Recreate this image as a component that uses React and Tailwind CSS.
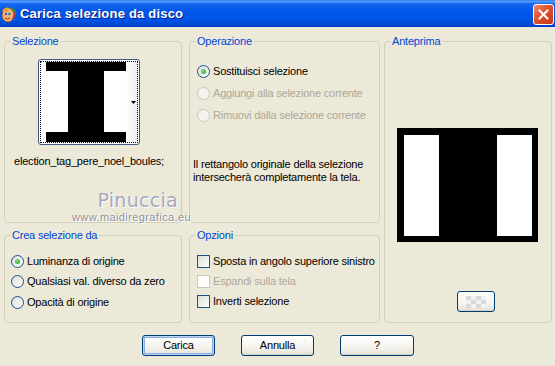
import React from "react";

function Radio({ checked, disabled }) {
  return (
    <span
      className={`inline-flex w-[13px] h-[13px] shrink-0 rounded-full border items-center justify-center ${
        disabled
          ? "border-[#CAC8BB] bg-[#F4F3EE]"
          : "border-[#1C5180] bg-[linear-gradient(135deg,#DCDCD7,#FFFFFF)]"
      }`}
    >
      {checked && (
        <span className="w-[5px] h-[5px] rounded-full bg-[radial-gradient(circle_at_35%_35%,#7BE07B,#21A121)]" />
      )}
    </span>
  );
}

function Check({ disabled }) {
  return (
    <span
      className={`inline-block w-[13px] h-[13px] shrink-0 border ${
        disabled
          ? "border-[#CAC8BB] bg-white"
          : "border-[#1C5180] bg-[linear-gradient(135deg,#DCDCD7,#FFFFFF)]"
      }`}
    />
  );
}

function Group({ label, className, children }) {
  return (
    <fieldset
      className={`border border-[#D0D0BF] rounded-[4px] m-0 p-0 min-w-0 ${className}`}
    >
      <legend className="ml-[5px] px-[2px] leading-[13px] text-[#0046D5]">
        {label}
      </legend>
      {children}
    </fieldset>
  );
}

function XPButton({ children, isDefault, className }) {
  return (
    <div
      className={`h-[21px] rounded-[3px] border border-[#003C74] flex items-center justify-center bg-[linear-gradient(180deg,#FFFFFF_0%,#F4F3EE_60%,#E3E0D6_100%)] text-black ${
        isDefault
          ? "shadow-[inset_0_0_0_1px_#BCD4F6,inset_0_0_0_2px_#89ADE4]"
          : "shadow-[inset_0_-1px_0_#D6D0C5]"
      } ${className}`}
    >
      {children}
    </div>
  );
}

function TitleIcon() {
  return (
    <svg width="16" height="18" viewBox="0 0 16 18">
      <ellipse cx="7" cy="10" rx="6" ry="7" fill="#F2B27A" stroke="#8A4A1A" strokeWidth="0.8" />
      <path d="M1 6 Q4 1 9 3 L6 7 Z" fill="#E8A030" />
      <circle cx="5" cy="9" r="1.2" fill="#2060D0" />
      <circle cx="8.5" cy="9" r="1.2" fill="#2060D0" />
      <path d="M4 13 Q6.5 15 9 13" stroke="#B02020" strokeWidth="1" fill="none" />
      <path d="M11 2 L15 6 L13 8 L10 4 Z" fill="#3A8A3A" />
      <rect x="12" y="7" width="2" height="8" fill="#C04040" transform="rotate(20 13 11)" />
    </svg>
  );
}

function CloseButton() {
  return (
    <div className="w-[21px] h-[21px] rounded-[3px] border border-white bg-[linear-gradient(135deg,#F08A6A_0%,#E0502C_45%,#C23A16_100%)] flex items-center justify-center">
      <svg width="11" height="11" viewBox="0 0 11 11">
        <path d="M1.5 1.5 L9.5 9.5 M9.5 1.5 L1.5 9.5" stroke="#FFFFFF" strokeWidth="2" strokeLinecap="square" />
      </svg>
    </div>
  );
}

export default function App() {
  return (
    <div className="relative w-[555px] h-[366px] overflow-hidden bg-[#ECE9D8] font-['Liberation_Sans',Arial,sans-serif] text-[11px] tracking-[-0.2px] text-black">
      {/* Title bar */}
      <div className="h-[27px] flex items-center bg-[linear-gradient(180deg,#2C7CF6_0%,#5A9CFF_6%,#1667F0_14%,#0058EA_40%,#0054E4_75%,#0046D2_92%,#003CC2_100%)]">
        <div className="w-[17px] pl-[1px] flex items-center">
          <TitleIcon />
        </div>
        <div className="ml-[3px] font-bold text-[13px] text-white [text-shadow:1px_1px_0_#0A1E8A] tracking-[0.2px]">
          Carica selezione da disco
        </div>
        <div className="ml-auto mr-[1px] mt-[1px]">
          <CloseButton />
        </div>
      </div>

      {/* Body */}
      <div className="flex pt-[8px] pl-[4px]">
        {/* Column 1 */}
        <div className="w-[178px] flex flex-col gap-[6px]">
          <Group label="Selezione" className="h-[188px]">
            <div className="ml-[33px] mt-[11px] w-[102px] h-[86px] rounded-[3px] border border-[#3D5A80] bg-white p-[1px]">
              <div className="h-full border border-dotted border-black flex">
                <div className="ml-[5px]">
                  <svg width="80" height="80" viewBox="0 0 80 80" className="block">
                    <rect width="80" height="80" fill="#FFFFFF" />
                    <rect x="0" y="0" width="80" height="9" fill="#000" />
                    <rect x="22" y="0" width="36" height="80" fill="#000" />
                    <rect x="0" y="70" width="80" height="10" fill="#000" />
                  </svg>
                </div>
                <div className="flex-1 bg-[linear-gradient(90deg,#FFFFFF,#EDEDED)] flex items-center justify-end pr-[1px]">
                  <svg width="5" height="3" viewBox="0 0 5 3">
                    <path d="M0 0 H5 L2.5 3 Z" fill="#000" />
                  </svg>
                </div>
              </div>
            </div>
            <div className="ml-[9px] mt-[10px] leading-[13px] whitespace-nowrap">
              election_tag_pere_noel_boules;
            </div>
          </Group>
          <Group label="Crea selezione da" className="h-[94px]">
            <div className="ml-[6px] mt-[9px] flex flex-col whitespace-nowrap">
              <div className="h-[20px] flex items-center gap-[3px]">
                <Radio checked />
                <span>Luminanza di origine</span>
              </div>
              <div className="h-[21px] flex items-center gap-[3px]">
                <Radio />
                <span>Qualsiasi val. diverso da zero</span>
              </div>
              <div className="h-[20px] flex items-center gap-[3px]">
                <Radio />
                <span>Opacità di origine</span>
              </div>
            </div>
          </Group>
        </div>

        {/* Column 2 */}
        <div className="ml-[7px] w-[191px] flex flex-col gap-[6px]">
          <Group label="Operazione" className="h-[188px]">
            <div className="ml-[7px] mt-[12px] flex flex-col whitespace-nowrap">
              <div className="h-[22px] flex items-center gap-[3px]">
                <Radio checked />
                <span>Sostituisci selezione</span>
              </div>
              <div className="h-[22px] flex items-center gap-[3px] text-[#ACA899]">
                <Radio disabled />
                <span>Aggiungi alla selezione corrente</span>
              </div>
              <div className="h-[22px] flex items-center gap-[3px] text-[#ACA899]">
                <Radio disabled />
                <span>Rimuovi dalla selezione corrente</span>
              </div>
            </div>
            <div className="ml-[3px] mt-[32px] leading-[13px] whitespace-nowrap">
              Il rettangolo originale della selezione
              <br />
              intersecherà completamente la tela.
            </div>
          </Group>
          <Group label="Opzioni" className="h-[94px]">
            <div className="ml-[7px] mt-[9px] flex flex-col whitespace-nowrap">
              <div className="h-[20px] flex items-center gap-[3px]">
                <Check />
                <span>Sposta in angolo superiore sinistro</span>
              </div>
              <div className="h-[20px] flex items-center gap-[3px] text-[#ACA899]">
                <Check disabled />
                <span>Espandi sulla tela</span>
              </div>
              <div className="h-[20px] flex items-center gap-[3px]">
                <Check />
                <span>Inverti selezione</span>
              </div>
            </div>
          </Group>
        </div>

        {/* Column 3 */}
        <div className="ml-[4px] w-[168px]">
          <Group label="Anteprima" className="h-[288px]">
            <div className="ml-[12px] mt-[80px]">
              <svg width="141" height="114" viewBox="0 0 141 114" className="block">
                <rect width="141" height="114" fill="#000" />
                <rect x="7" y="7" width="35" height="101" fill="#FFF" />
                <rect x="100" y="7" width="35" height="101" fill="#FFF" />
              </svg>
            </div>
            <div className="ml-[72px] mt-[49px]">
              <XPButton className="w-[38px] h-[19px]">
                <svg width="20" height="12" viewBox="0 0 20 12">
                  <rect width="20" height="12" fill="#F2F2F2" />
                  <rect x="0" y="0" width="5" height="4" fill="#DADADA" />
                  <rect x="10" y="0" width="5" height="4" fill="#DADADA" />
                  <rect x="5" y="4" width="5" height="4" fill="#DADADA" />
                  <rect x="15" y="4" width="5" height="4" fill="#DADADA" />
                  <rect x="0" y="8" width="5" height="4" fill="#DADADA" />
                  <rect x="10" y="8" width="5" height="4" fill="#DADADA" />
                </svg>
              </XPButton>
            </div>
          </Group>
        </div>
      </div>

      {/* Buttons */}
      <div className="flex pl-[142px] mt-[12px] gap-[26px]">
        <XPButton isDefault className="w-[73px]">Carica</XPButton>
        <XPButton className="w-[73px]">Annulla</XPButton>
        <XPButton className="w-[74px]">?</XPButton>
      </div>

      {/* Watermark */}
      <div className="absolute left-[72px] top-[190px] w-[120px] flex flex-col items-end pointer-events-none">
        <div className="mr-[14px] text-[19px] leading-[20px] tracking-[0.3px] text-[#A3A6BE] font-['DejaVu_Sans',sans-serif] [text-shadow:0_0_1px_#FFFFFF,1px_1px_0_#FFFFFF]">
          Pinuccia
        </div>
        <div className="mt-[2px] w-[120px] text-[11px] leading-[11px] text-[#8E8E98] font-['Liberation_Sans',sans-serif] tracking-[0.4px] [text-shadow:0_0_1px_#FFFFFF,1px_1px_0_#FFFFFF]">
          www.maidiregrafica.eu
        </div>
      </div>
    </div>
  );
}
